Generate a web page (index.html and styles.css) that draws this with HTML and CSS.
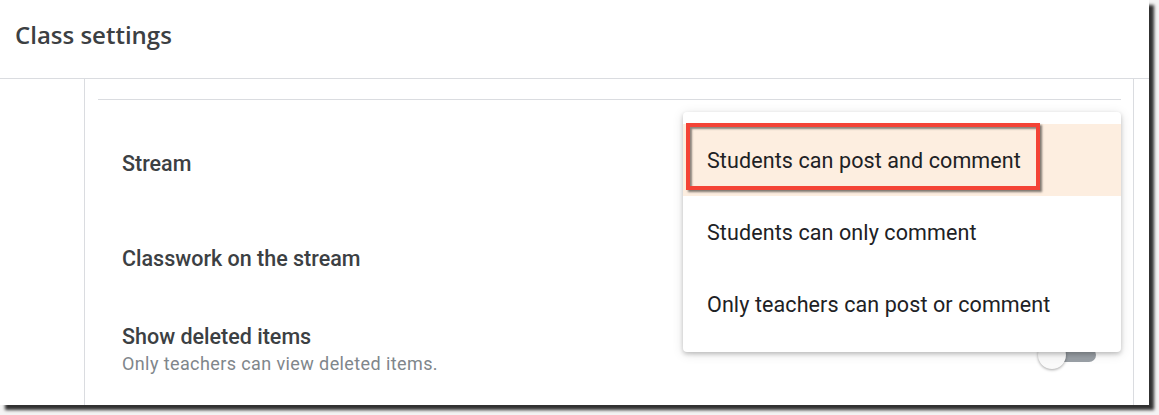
FILE: index.html
```html
<!DOCTYPE html>
<html lang="en">
<head>
<meta charset="utf-8">
<title>Class settings</title>
<link rel="stylesheet" href="styles.css">
</head>
<body>
<div class="frame">
  <header class="topbar">
    <h1 class="title">Class settings</h1>
  </header>
  <div class="main">
    <div class="gutter"></div>
    <div class="content">
      <div class="card">
        <div class="row row-stream">
          <div class="label">Stream</div>
        </div>
        <div class="row row-classwork">
          <div class="label">Classwork on the stream</div>
        </div>
        <div class="row row-deleted">
          <div class="texts">
            <div class="label">Show deleted items</div>
            <div class="sub">Only teachers can view deleted items.</div>
          </div>
          <div class="toggle"><span class="track"></span><span class="thumb"></span></div>
        </div>
      </div>
    </div>
    <div class="edge"></div>
  </div>

  <div class="menu">
    <div class="item selected">Students can post and comment</div>
    <div class="item">Students can only comment</div>
    <div class="item">Only teachers can post or comment</div>
  </div>
  <div class="callout"></div>
</div>
</body>
</html>
```

FILE: styles.css
```css
* { box-sizing: border-box; }
html, body { margin: 0; padding: 0; }
body {
  background: #f4f4f4;
  width: 1159px;
  height: 415px;
  overflow: hidden;
  font-family: Roboto, "Liberation Sans", Arial, sans-serif;
}
.frame {
  position: relative;
  width: 1149px;
  height: 405px;
  background: #fff;
  box-shadow: 5px 5px 3px rgba(0, 0, 0, 0.8);
  display: flex;
  flex-direction: column;
}
.topbar {
  height: 79px;
  border-bottom: 1px solid #dadce0;
  display: flex;
  align-items: center;
  padding-left: 15px;
  flex: none;
}
.title {
  margin: 0 0 9px 0;
  font-family: "Open Sans", Roboto, sans-serif;
  font-weight: 600;
  font-size: 24px;
  letter-spacing: 0;
  color: #3c4043;
}
.main {
  flex: 1;
  display: flex;
}
.gutter {
  width: 85px;
  border-right: 1px solid #dadce0;
  flex: none;
}
.content {
  width: 1049px;
  border-right: 1px solid #dadce0;
  padding: 20px 12px 0 13px;
  flex: none;
}
.edge { flex: 1; }
.card {
  border-top: 1px solid #dadce0;
  padding: 0 25px 0 24px;
}
.row {
  display: flex;
  align-items: center;
  justify-content: space-between;
}
.row-stream { height: 128px; }
.row-classwork { height: 61px; }
.row-deleted { padding-top: 35px; align-items: flex-start; }
.label {
  font-size: 21.5px;
  font-weight: 500;
  color: #3c4043;
  line-height: 26px;
}
.sub {
  font-size: 18px;
  color: #80868b;
  line-height: 22px;
  margin-top: 3px;
  letter-spacing: 0.4px;
}
.toggle {
  position: relative;
  width: 58px;
  height: 30px;
  margin-top: 15px;
}
.track {
  position: absolute;
  left: 6px;
  right: 0;
  top: 9px;
  height: 14px;
  border-radius: 7px;
  background: #9aa0a6;
}
.thumb {
  position: absolute;
  left: 0;
  top: 2px;
  width: 28px;
  height: 28px;
  border-radius: 50%;
  background: #fafafa;
  box-shadow: 0 1px 3px rgba(0,0,0,0.35);
}
.menu {
  position: absolute;
  left: 683px;
  top: 112px;
  width: 438px;
  height: 240px;
  padding: 12px 0;
  background: #fff;
  border-radius: 4px;
  box-shadow: 0 2px 4px rgba(0,0,0,0.2), 0 2px 12px rgba(0,0,0,0.12);
}
.item {
  height: 72px;
  display: flex;
  align-items: center;
  padding-left: 24px;
  font-size: 21.5px;
  color: #202124;
  letter-spacing: 0.1px;
}
.item.selected { background: #fdeee0; }
.callout {
  position: absolute;
  left: 686px;
  top: 123px;
  width: 354px;
  height: 67px;
  border: 4px solid #f44336;
  box-shadow: 2px 2px 2px rgba(0,0,0,0.5), inset 2px 2px 2px rgba(0,0,0,0.45);
}
```
